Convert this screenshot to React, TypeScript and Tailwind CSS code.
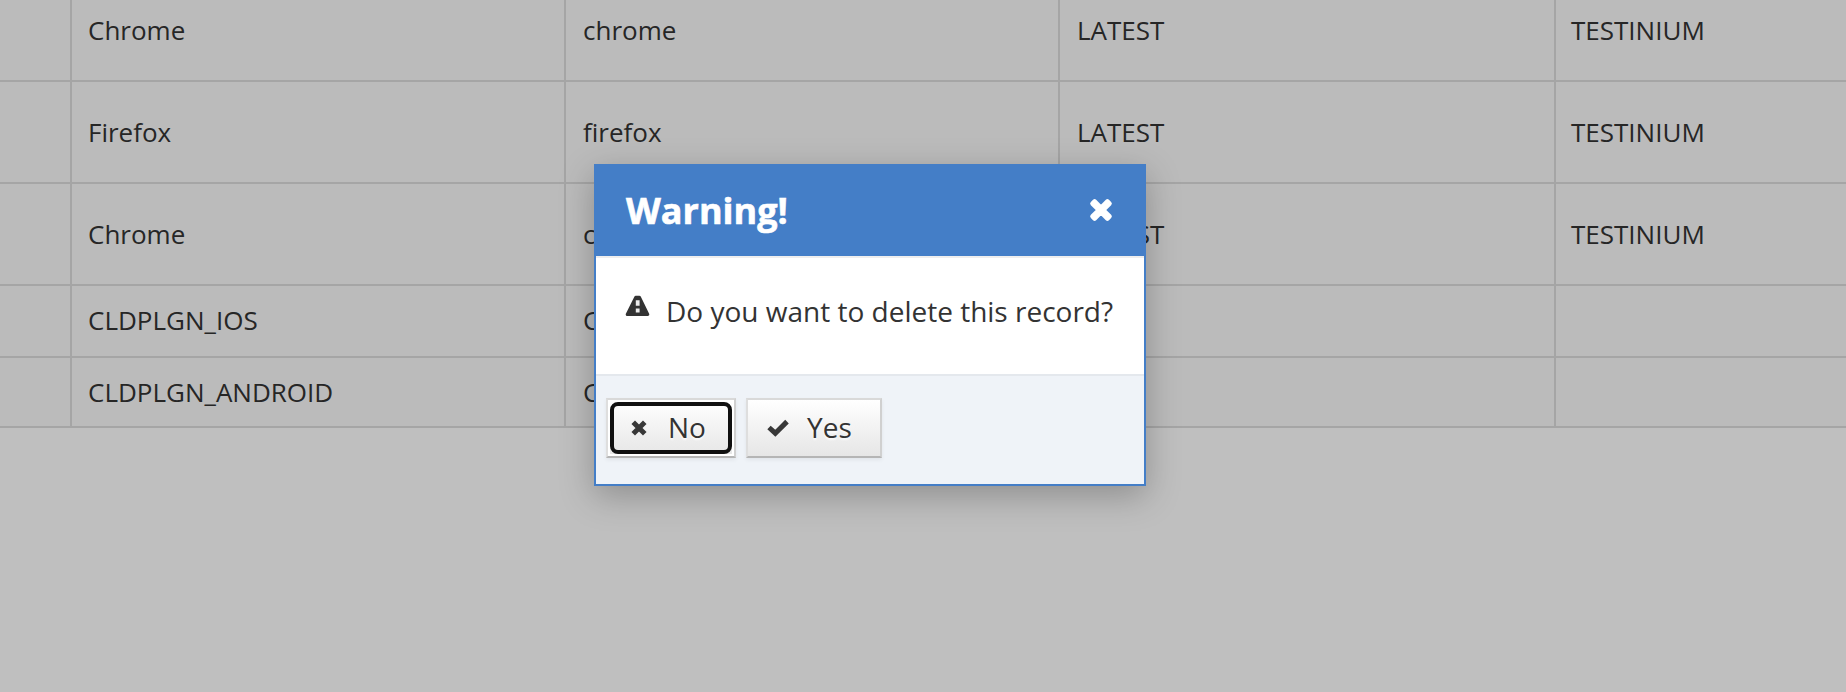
const rows = [
  { cells: ["Chrome", "chrome", "LATEST", "TESTINIUM"], height: "h-[102px]" },
  { cells: ["Firefox", "firefox", "LATEST", "TESTINIUM"], height: "h-[102px]" },
  { cells: ["Chrome", "chrome", "LATEST", "TESTINIUM"], height: "h-[102px]" },
  { cells: ["CLDPLGN_IOS", "CLDPLGN_IOS", "", ""], height: "h-[72px] pb-0.5" },
  { cells: ["CLDPLGN_ANDROID", "CLDPLGN_ANDROID", "", ""], height: "h-[70px]" },
];

const cellPadding = ["pl-4", "pl-[17px]", "pl-[17px]", "pl-[15px]"];

function RecordsTable() {
  return (
    <div className="-mt-5 bg-[#bbbbbb] text-[26px] leading-9 text-[#262626]">
      {rows.map((row, i) => (
        <div
          key={i}
          className="grid grid-cols-[72px_494px_494px_496px_1fr] border-b-2 border-[#a5a5a5]"
        >
          <div className="border-r-2 border-[#a5a5a5]" />
          {row.cells.map((cell, j) => (
            <div
              key={j}
              className={`-mb-0.5 flex items-center border-[#a5a5a5] not-last:border-r-2 ${cellPadding[j]} ${row.height}`}
            >
              <span className="-mt-0.5">{cell}</span>
            </div>
          ))}
        </div>
      ))}
    </div>
  );
}

function CloseIcon() {
  return (
    <svg className="h-6 w-6" viewBox="0 0 24 24" stroke="#fff" strokeWidth="5.4" strokeLinejoin="round" fill="#fff">
      <path d="M3.4 5.6 5.6 3.4 12 9.8 18.4 3.4 20.6 5.6 14.2 12 20.6 18.4 18.4 20.6 12 14.2 5.6 20.6 3.4 18.4 9.8 12Z" strokeWidth="4.4" />
    </svg>
  );
}

function WarningIcon() {
  return (
    <svg className="h-[23px] w-[25px] blur-[0.6px]" viewBox="0 0 25 23">
      <path d="M10.8 3.2h3.6L22.8 20.4H2.2Z" fill="#333" stroke="#333" strokeWidth="3" strokeLinejoin="round" />
      <path d="M10.8 6.2h3.8v5.6h-3.8zM10.8 14.6h3.8v3.8h-3.8z" fill="#ececec" />
    </svg>
  );
}

function CrossIcon() {
  return (
    <svg className="h-4 w-4 blur-[0.7px]" viewBox="0 0 16 16" stroke="#383838" strokeWidth="5" strokeLinecap="square">
      <path d="M4 4 12 12M12 4 4 12" />
    </svg>
  );
}

function CheckIcon() {
  return (
    <svg className="h-[18px] w-[22px] blur-[0.7px]" viewBox="0 0 22 18" fill="none" stroke="#383838" strokeWidth="5">
      <path d="M2 8.5 8.3 14.2 20 2.6" />
    </svg>
  );
}

const buttonBase =
  "flex h-[60px] items-center border-2 border-t-[#d9d9d9] border-r-[#d0d0d0] border-b-[#b5b5b5] border-l-[#dedede] bg-linear-to-b from-white to-[#e6e6e6] text-[28px] leading-9 text-[#333] shadow-[0_2px_4px_rgba(0,0,0,0.06)] [text-shadow:0_2px_2px_rgba(255,255,255,0.75)]";

function WarningDialog() {
  return (
    <div
      role="dialog"
      className="absolute top-[164px] left-[594px] flex h-[322px] w-[552px] flex-col border-2 border-[#447ec7] bg-white shadow-[0_10px_32px_rgba(0,0,0,0.25)]"
    >
      <div className="flex h-[90px] shrink-0 items-center justify-between bg-[#447ec7] pr-[31px] pl-[30px]">
        <h2 className="text-[36px] leading-[50px] font-bold text-white [-webkit-text-stroke:0.6px_#fff]">
          Warning!
        </h2>
        <button aria-label="Close" className="pb-0.5">
          <CloseIcon />
        </button>
      </div>
      <div className="flex grow items-start border-t-2 border-[#eeeeee] pt-9 pl-[29px]">
        <WarningIcon />
        <p className="-mt-0.5 ml-4 text-[28px] leading-[38px] whitespace-nowrap text-[#333]">
          Do you want to delete this record?
        </p>
      </div>
      <div className="flex h-[110px] shrink-0 gap-[10px] border-t-2 border-[#e4e8ed] bg-[#eff3f8] pt-[22px] pl-[10px]">
        <button className={`${buttonBase} relative w-[130px] pl-[23px]`}>
          <CrossIcon />
          <span className="-mt-0.5 ml-[21px]">No</span>
          <span className="pointer-events-none absolute inset-0 border-2 border-white">
            <span className="block h-full w-full rounded-lg border-4 border-[#101010]" />
          </span>
        </button>
        <button className={`${buttonBase} w-[136px] pl-[19px]`}>
          <CheckIcon />
          <span className="-mt-0.5 ml-[18px]">Yes</span>
        </button>
      </div>
    </div>
  );
}

export default function App() {
  return (
    <main className="relative flex h-[692px] w-[1846px] flex-col overflow-hidden bg-[#bfbfbf] font-['Open_Sans',sans-serif]">
      <RecordsTable />
      <WarningDialog />
    </main>
  );
}
